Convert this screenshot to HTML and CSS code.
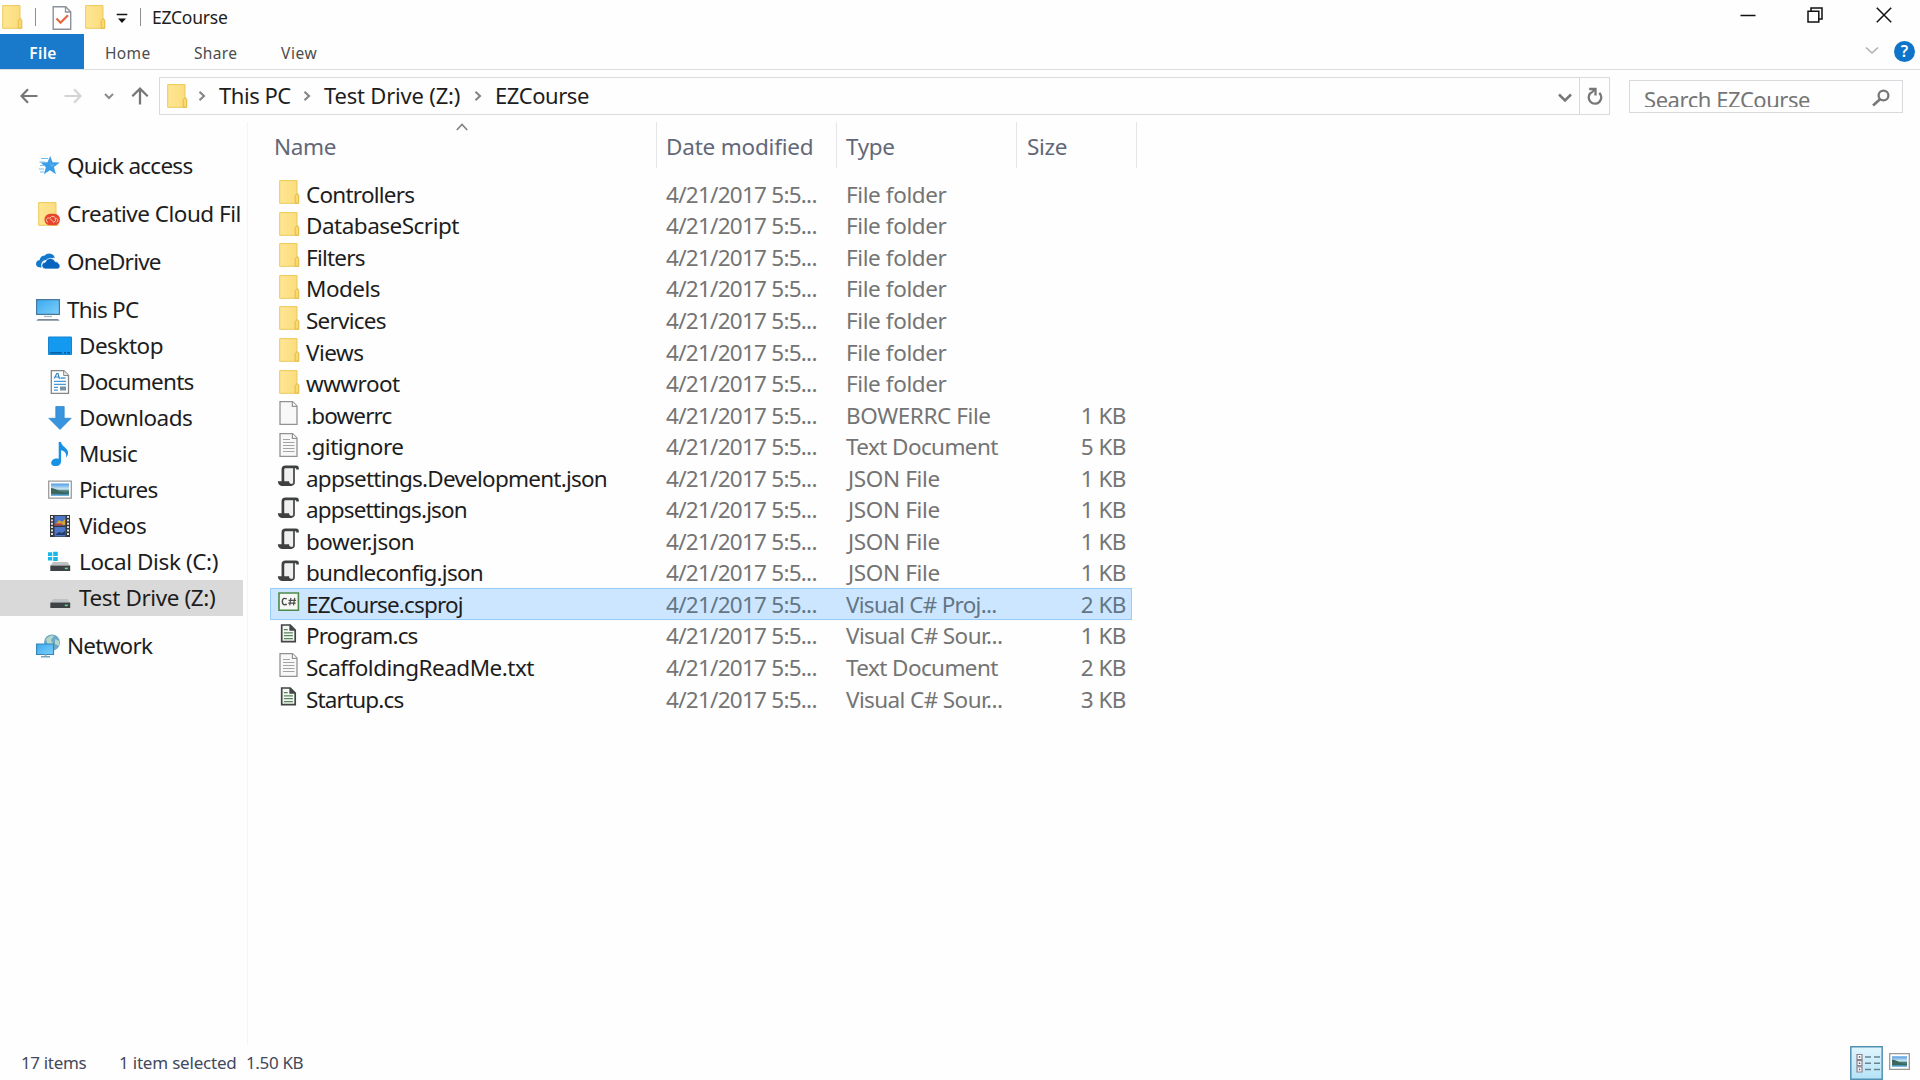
FILE: index.html
```html
<!DOCTYPE html>
<html lang="en">
<head>
<meta charset="utf-8">
<title>EZCourse</title>
<link rel="stylesheet" href="styles.css">
</head>
<body>
<svg class="defs" width="0" height="0" aria-hidden="true">
  <defs>
    <linearGradient id="gFolder" x1="0" y1="0" x2="1" y2="0"><stop offset="0" stop-color="#ffe694"/><stop offset="1" stop-color="#fbdc7c"/></linearGradient>
    <linearGradient id="gScreen" x1="0" y1="0" x2="1" y2="1"><stop offset="0" stop-color="#3aa9ee"/><stop offset="1" stop-color="#7fd0fb"/></linearGradient>
    <linearGradient id="gSky" x1="0" y1="0" x2="0" y2="1"><stop offset="0" stop-color="#4f9be0"/><stop offset=".45" stop-color="#cfe8f6"/><stop offset=".6" stop-color="#45786c"/><stop offset="1" stop-color="#4d9fd8"/></linearGradient>
    <linearGradient id="gSel" x1="0" y1="0" x2="0" y2="1"><stop offset="0" stop-color="#e0f5fd"/><stop offset="1" stop-color="#b5e3f8"/></linearGradient>
    <symbol id="folder" viewBox="0 0 24 24">
      <path d="M2.700.600h17.300v12.700l1.400 1.600v8.400H2.700z" fill="url(#gFolder)" stroke="#ecc95a" stroke-width="1"/>
      <path d="M18.200 23.200v-7.500l1.900-2.200 1.700 2.200v7.500z" fill="#fbd96d" stroke="#dfb846" stroke-width=".9"/>
    </symbol>
    <symbol id="page" viewBox="0 0 24 24">
      <path d="M3 .7h12.600l4.400 4.400v18.200H3z" fill="#f8f8f8" stroke="#929292" stroke-width="1.300"/>
      <path d="M15.400.8v4.600H20" fill="#fff" stroke="#929292" stroke-width="1.200"/>
    </symbol>
    <symbol id="text" viewBox="0 0 24 24">
      <use href="#page"/>
      <path d="M6 6.500h7M6 9.500h11.500M6 12.500h11.500M6 15.500h11.500M6 18.500h11.500" stroke="#a4a4a4" stroke-width="1.200"/>
    </symbol>
    <symbol id="json" viewBox="0 0 24 24">
      <path d="M6 4.500h11.500V19H7z" fill="#f0f0f0"/>
      <path d="M20.500 5.500V4.300Q20.500 2.900 19 2.900H8.500Q5.900 2.900 5.900 5.500V18" fill="none" stroke="#3e4042" stroke-width="2.700"/>
      <path d="M17 4v14.500Q17 20.700 14.300 20.900" fill="none" stroke="#4b4d4f" stroke-width="1.800"/>
      <path d="M.800 17.300h11.200q.2 2.600 3 2.700v2.100H4.800Q1.200 21.600.800 17.300z" fill="#3e4042"/>
    </symbol>
    <symbol id="csproj" viewBox="0 0 24 24">
      <path d="M2 3h19.400v17.300H2z" fill="#f5f8f3" stroke="#4d8a4b" stroke-width="1.600"/>
      <path d="M9.800 8.900Q5.500 7.100 5.300 11.500 5.500 15.900 9.800 14.300" fill="none" stroke="#4c4c4c" stroke-width="1.500"/>
      <path d="M13.900 7.900l-1.200 7.500M17.700 7.900l-1.200 7.500M11.600 10.300h7.500M11.200 13.100h7.500" stroke="#4c4c4c" stroke-width="1.200"/>
    </symbol>
    <symbol id="cs" viewBox="0 0 24 24">
      <path d="M4.700 3h8.500l5 5v11.700H4.700z" fill="#f4f7f3" stroke="#414543" stroke-width="1.700"/>
      <path d="M12.400 2.700v6h6z" fill="#414543"/>
      <path d="M6.900 7.700h3.800M6.900 10.800h9M6.900 13.700h9M6.900 16.600h9" stroke="#56875a" stroke-width="1.300"/>
    </symbol>
    <symbol id="star" viewBox="0 0 24 24">
      <path d="M14.200 2l2.300 6.300 7.200.3-5.800 4.500 2 7.200-6-4-6 4 2-7-5.500-4.700 7.100-.3z" fill="#3b9de6"/>
      <path d="M5 4.500h7M3.500 8h6M4 11.500h5M3 15h5M4 18h4" stroke="#72bdf1" stroke-width="1.100"/>
      <path d="M13.500 6l1.500 4.500 4 .3-4 2" fill="#62b8f4"/>
    </symbol>
    <symbol id="ccloud" viewBox="0 0 24 24">
      <use href="#folder"/>
      <rect x="8.500" y="11.800" width="15.500" height="11.500" rx="5.700" fill="#e7452c"/>
      <path d="M12 20.300q-2-.5-1.700-2.700.6-2 2.900-1.700l4.300 4M20.500 20.300q2-.7 1.300-2.900-1.100-1.700-3-.8M14 16.200q1.200-2.700 3.900-1.700 2 .9 1.700 3.500-.4 2.300-2.600 2.400" fill="none" stroke="#fac1aa" stroke-width="1"/>
    </symbol>
    <symbol id="cloud" viewBox="0 0 24 24">
      <path d="M5.500 17.500H4.200Q0 17.200 0 13.800q.2-3.400 3.600-3.900Q4.700 5.500 9 5.500q.8-2 4.500-2.100 4.200.4 5.400 4.500-3.700-.8-5.700 2Q6.500 9.400 5.300 14z" fill="#1478cd"/>
      <path d="M9.500 19Q5.800 18.800 5.800 15.500q.2-3 3.600-3.400.8-3.700 4.700-3.800 3.600 0 5 3.300 2.800-.2 3.700 2.200h.2Q24 14.600 24 16.300q0 2.600-2.700 2.700z" fill="#0764be" stroke="#fff" stroke-width=".7"/>
    </symbol>
    <symbol id="pc" viewBox="0 0 24 24">
      <path d="M.6 1.600h22.800v14.800H.6z" fill="url(#gScreen)" stroke="#46799f" stroke-width="1.200"/>
      <path d="M8 18.500h8" stroke="#a5b8c4" stroke-width="1.300"/>
      <path d="M2 21h20l1.700 1.800H.3z" fill="#7b8a96"/>
    </symbol>
    <symbol id="desktop" viewBox="0 0 24 24">
      <path d="M.5 3h23v17.500H.5z" fill="#139af0" stroke="#1684cf"/>
      <path d="M2 18.800h20" stroke="#064f8e" stroke-width="1.300" stroke-dasharray="12 2 2 1"/>
    </symbol>
    <symbol id="docs" viewBox="0 0 24 24">
      <path d="M3.300.7h12.500l4.700 4.600v18H3.300z" fill="#fff" stroke="#858585" stroke-width="1.300"/>
      <path d="M15.700.7v4.800h4.800" fill="#eee" stroke="#858585"/>
      <path d="M6.200 8.500l2.600-5h1.200L11.500 9M7.500 7h3" fill="none" stroke="#3487c7" stroke-width="1.200"/>
      <path d="M12.500 8h5M6 11.300h12M6 14.300h12M6 17.300h4M6 20.200h4" stroke="#4798d3" stroke-width="1.300"/>
      <path d="M12 16.500h6v4h-6z" fill="#7593a6"/>
    </symbol>
    <symbol id="down" viewBox="0 0 24 24">
      <path d="M7.800.5h8.400v11.800h7L12 23.500.8 12.300h7z" fill="#3994de" stroke="#287fc8" stroke-width=".7"/>
    </symbol>
    <symbol id="music" viewBox="0 0 24 24">
      <path d="M10.700 0h2.300c.7 5 7.700 6 7 11.500-.2 1.800-.9 3-2 4.300 1-5-1.600-6.700-4.900-7.500v11.200c0 3-3 4.800-5.700 4.700-2.500 0-4.400-1.500-4.200-3.500.3-3.500 4.500-4.900 7.500-4z" fill="#1691e4"/>
    </symbol>
    <symbol id="pics" viewBox="0 0 24 24">
      <path d="M.7 3.200h22.600v17H.7z" fill="#fff" stroke="#9c9c9c" stroke-width="1.300"/>
      <path d="M3 5.500h18v12.300H3z" fill="url(#gSky)"/>
      <path d="M3 10q6 1 9 3.500 4 1 9 1v1.500q-10 .5-18-.5z" fill="#3d665c"/>
    </symbol>
    <symbol id="video" viewBox="0 0 24 24">
      <path d="M2 1h20v22H2z" fill="#36393c"/>
      <path d="M4 2v20M20 2v20" stroke="#e8e8e8" stroke-width="1.900" stroke-dasharray="1.900 1.500"/>
      <path d="M6.500 2h11v9.500h-11zM6.500 13h11v9.500h-11z" fill="#4d75c8"/>
      <path d="M7 11l4-5 3 2 3-3v6z" fill="#d5a337"/><path d="M6.500 9.500h8v2h-8z" fill="#b94448"/>
      <path d="M7 21l4-3 3 1 3-2v4z" fill="#263c68"/>
    </symbol>
    <symbol id="disk" viewBox="0 0 24 24">
      <path d="M5 13h14.500l2.500 3.500H2.500z" fill="#bfc2c4"/>
      <path d="M2.300 16.500h19.900v5.500H2.300z" fill="#3f4244"/>
      <path d="M16.800 19.400h3" stroke="#5fe08a" stroke-width="1.500"/>
    </symbol>
    <symbol id="cdisk" viewBox="0 0 24 24">
      <use href="#disk" y="-1"/>
      <path d="M0 2.200h4.200v3.700H0zM5.200 1.700h4.600v4.200H5.200zM0 6.900h4.200v3.700H0zM5.200 6.900h4.600v4.200H5.200z" fill="#19b8e8"/>
    </symbol>
    <symbol id="net" viewBox="0 0 24 24">
      <circle cx="16" cy="8.500" r="8" fill="#6da9c7"/>
      <path d="M10 5q5-5 8-3l-3 4 2 4-5 2zM19 5l4 2v5l-4-2z" fill="#b4d7c9"/>
      <path d="M.6 10h16.900v10.500H.6z" fill="url(#gScreen)" stroke="#3985b8" stroke-width="1.200"/>
      <path d="M5 22.800h9M9.500 20v3" stroke="#78a5bd" stroke-width="1.400"/>
    </symbol>
    <symbol id="chev" viewBox="0 0 10 12"><path d="M2.500 1.800L7 6l-4.500 4.200" fill="none" stroke="#848484" stroke-width="2.100"/></symbol>
  </defs>
</svg>

<div class="window">
  <header class="titlebar">
    <svg class="t-folder"><use href="#folder"/></svg>
    <i class="t-sep sep-a"></i>
    <svg class="t-check" viewBox="0 0 20 24"><path d="M1.200.8h12.500l5 5v17.400H1.200z" fill="#fff" stroke="#8c919b" stroke-width="1.400"/><path d="M13.500 1v5h5" fill="none" stroke="#8c919b" stroke-width="1.300"/><path d="M4.500 12.500l4 4.200 7.500-7.500" fill="none" stroke="#e8693f" stroke-width="2.300"/></svg>
    <svg class="t-folder second"><use href="#folder"/></svg>
    <svg class="t-more" viewBox="0 0 12 12"><path d="M.7 1.500h10.600" stroke="#111" stroke-width="1.500"/><path d="M2 5.500h8L6 10z" fill="#111"/></svg>
    <i class="t-sep sep-b"></i>
    <h1>EZCourse</h1>
    <div class="controls">
      <svg class="c-min" viewBox="0 0 16 16"><path d="M.5 8.500h15" stroke="#111" stroke-width="1.500"/></svg>
      <svg class="c-max" viewBox="0 0 16 16"><path d="M1 4.200h10.800V15H1zM4 4V1h11v11h-3" fill="none" stroke="#111" stroke-width="1.500"/></svg>
      <svg class="c-close" viewBox="0 0 16 16"><path d="M.8.800l14.400 14.400M15.200.800L.8 15.200" stroke="#111" stroke-width="1.500"/></svg>
    </div>
  </header>

  <nav class="ribbon">
    <span class="tab file">File</span>
    <span class="tab home">Home</span>
    <span class="tab share">Share</span>
    <span class="tab view">View</span>
    <div class="ribbon-end">
      <svg class="expand" viewBox="0 0 14 10"><path d="M1 1.500l6 5.500 6-5.500" fill="none" stroke="#b0b0b0" stroke-width="1.600"/></svg>
      <span class="help">?</span>
    </div>
  </nav>

  <div class="addressbar">
    <svg class="n-back" viewBox="0 0 18 16"><path d="M17.500 8H1.500M8 1.300L1.500 8 8 14.700" fill="none" stroke="#777" stroke-width="2.200"/></svg>
    <svg class="n-fwd" viewBox="0 0 18 16"><path d="M.5 8h16M10 1.300L16.500 8 10 14.700" fill="none" stroke="#d4d4d4" stroke-width="2.200"/></svg>
    <svg class="n-recent" viewBox="0 0 10 7"><path d="M1 1l4 4 4-4" fill="none" stroke="#8b8b8b" stroke-width="2"/></svg>
    <svg class="n-up" viewBox="0 0 18 18"><path d="M9 17.500V2M1.300 9.300L9 1.600l7.700 7.700" fill="none" stroke="#777" stroke-width="2.300"/></svg>
    <div class="path">
      <svg class="p-folder"><use href="#folder"/></svg>
      <svg class="p-chev"><use href="#chev"/></svg><span class="crumb c1">This PC</span>
      <svg class="p-chev"><use href="#chev"/></svg><span class="crumb c2">Test Drive (Z:)</span>
      <svg class="p-chev"><use href="#chev"/></svg><span class="crumb c3">EZCourse</span>
      <svg class="p-down" viewBox="0 0 14 10"><path d="M1 1.500l6 6 6-6" fill="none" stroke="#777" stroke-width="2.500"/></svg>
      <div class="refresh"><svg viewBox="0 0 16 18"><path d="M12.300 5.800A6.300 6.300 0 1 1 3.800 5.700" fill="none" stroke="#777" stroke-width="2.300"/><path d="M2.200 2h6.300v6.500" fill="none" stroke="#777" stroke-width="2.300"/><path d="M8 2.500L3.800 6.300" stroke="#777" stroke-width="2"/></svg></div>
    </div>
    <div class="search">
      <span class="query">Search EZCourse</span>
      <svg viewBox="0 0 18 18"><circle cx="11.500" cy="6.500" r="4.900" fill="none" stroke="#777" stroke-width="2.300"/><path d="M8 10.200L1 16.500" stroke="#777" stroke-width="2.600"/></svg>
    </div>
  </div>

  <main class="body">
    <aside class="tree">
      <div class="node top"><svg><use href="#star"/></svg><span class="tight">Quick access</span></div>
      <div class="node top"><svg><use href="#ccloud"/></svg><span>Creative Cloud Fil</span></div>
      <div class="node top"><svg><use href="#cloud"/></svg><span class="tight">OneDrive</span></div>
      <div class="node"><svg><use href="#pc"/></svg><span class="tight">This PC</span></div>
      <div class="node sub"><svg><use href="#desktop"/></svg><span>Desktop</span></div>
      <div class="node sub"><svg><use href="#docs"/></svg><span class="tight">Documents</span></div>
      <div class="node sub"><svg><use href="#down"/></svg><span>Downloads</span></div>
      <div class="node sub"><svg><use href="#music"/></svg><span class="tight">Music</span></div>
      <div class="node sub"><svg><use href="#pics"/></svg><span class="tight">Pictures</span></div>
      <div class="node sub"><svg><use href="#video"/></svg><span>Videos</span></div>
      <div class="node sub"><svg><use href="#cdisk"/></svg><span class="wide">Local Disk (C:)</span></div>
      <div class="node sub current"><svg><use href="#disk"/></svg><span class="wide">Test Drive (Z:)</span></div>
      <div class="node"><svg><use href="#net"/></svg><span class="tight">Network</span></div>
    </aside>

    <section class="list">
      <div class="head">
        <div class="h-name">Name<svg class="sort" viewBox="0 0 12 8"><path d="M.8 7L6 1.500 11.200 7" fill="none" stroke="#808080" stroke-width="1.600"/></svg></div>
        <div class="h-date">Date modified</div>
        <div class="h-type">Type</div>
        <div class="h-size">Size</div>
      </div>
      <div class="rows">
        <div class="row"><svg><use href="#folder"/></svg><b class="tight">Controllers</b><time>4/21/2017 5:5...</time><span>File folder</span><em></em></div>
        <div class="row"><svg><use href="#folder"/></svg><b>DatabaseScript</b><time>4/21/2017 5:5...</time><span>File folder</span><em></em></div>
        <div class="row"><svg><use href="#folder"/></svg><b class="tight">Filters</b><time>4/21/2017 5:5...</time><span>File folder</span><em></em></div>
        <div class="row"><svg><use href="#folder"/></svg><b>Models</b><time>4/21/2017 5:5...</time><span>File folder</span><em></em></div>
        <div class="row"><svg><use href="#folder"/></svg><b class="tight">Services</b><time>4/21/2017 5:5...</time><span>File folder</span><em></em></div>
        <div class="row"><svg><use href="#folder"/></svg><b>Views</b><time>4/21/2017 5:5...</time><span>File folder</span><em></em></div>
        <div class="row"><svg><use href="#folder"/></svg><b>wwwroot</b><time>4/21/2017 5:5...</time><span>File folder</span><em></em></div>
        <div class="row"><svg><use href="#page"/></svg><b class="tighter">.bowerrc</b><time>4/21/2017 5:5...</time><span>BOWERRC File</span><em>1 KB</em></div>
        <div class="row"><svg><use href="#text"/></svg><b>.gitignore</b><time>4/21/2017 5:5...</time><span class="doc">Text Document</span><em>5 KB</em></div>
        <div class="row"><svg><use href="#json"/></svg><b class="tight">appsettings.Development.json</b><time>4/21/2017 5:5...</time><span class="json">JSON File</span><em>1 KB</em></div>
        <div class="row"><svg><use href="#json"/></svg><b class="tighter">appsettings.json</b><time>4/21/2017 5:5...</time><span class="json">JSON File</span><em>1 KB</em></div>
        <div class="row"><svg><use href="#json"/></svg><b>bower.json</b><time>4/21/2017 5:5...</time><span class="json">JSON File</span><em>1 KB</em></div>
        <div class="row"><svg><use href="#json"/></svg><b class="tight">bundleconfig.json</b><time>4/21/2017 5:5...</time><span class="json">JSON File</span><em>1 KB</em></div>
        <div class="row selected"><svg><use href="#csproj"/></svg><b class="tighter">EZCourse.csproj</b><time>4/21/2017 5:5...</time><span class="proj">Visual C# Proj...</span><em>2 KB</em></div>
        <div class="row"><svg><use href="#cs"/></svg><b class="tighter">Program.cs</b><time>4/21/2017 5:5...</time><span class="doc">Visual C# Sour...</span><em>1 KB</em></div>
        <div class="row"><svg><use href="#text"/></svg><b>ScaffoldingReadMe.txt</b><time>4/21/2017 5:5...</time><span class="doc">Text Document</span><em>2 KB</em></div>
        <div class="row"><svg><use href="#cs"/></svg><b class="tighter">Startup.cs</b><time>4/21/2017 5:5...</time><span class="doc">Visual C# Sour...</span><em>3 KB</em></div>
      </div>
    </section>
  </main>

  <footer class="status">
    <span class="s-count">17 items</span>
    <span class="s-sel">1 item selected</span>
    <span class="s-size">1.50 KB</span>
    <div class="views">
      <svg class="v-details" viewBox="0 0 33 34"><path d="M.8.800h31.400v32.400H.8z" fill="url(#gSel)" stroke="#5391b0" stroke-width="1.500"/><path d="M7 8.500h5v5H7zM7 14.700h5v5H7zM7 21h5v5H7z" fill="#fff" stroke="#8d7f8b" stroke-width="1.200"/><path d="M8.800 11h1.500M8.800 17.200h1.500M8.800 23.500h1.500" stroke="#555" stroke-width="1.500"/><path d="M15 11h6M24 11h6M15 17.200h6M24 17.200h6M15 23.500h6M24 23.500h6" stroke="#66838e" stroke-width="1.500"/></svg>
      <svg class="v-large" viewBox="0 0 21 17"><path d="M.7.700h19.600v15.600H.7z" fill="#fff" stroke="#989898" stroke-width="1.300"/><path d="M3 3.300h15v10.400H3z" fill="url(#gSky)"/><path d="M3 6.500q6 1 8 3.500l7 1v1H3z" fill="#3d665c"/></svg>
    </div>
  </footer>
</div>
</body>
</html>
```

FILE: styles.css
```css
* { box-sizing: border-box; }
body {
  margin: 0;
  background: #fefefe;
  font-family: "Noto Sans", "Open Sans", sans-serif;
  color: #1d1d1d;
}
svg { display: block; flex: none; overflow: visible; }
.defs { position: absolute; }
.window { width: 1920px; height: 1080px; display: flex; flex-direction: column; overflow: hidden; }

/* title bar */
.titlebar { height: 34px; flex: none; display: flex; align-items: center; }
.t-folder { width: 24px; height: 24px; }
.t-folder.second { margin-left: 11px; }
.t-sep { width: 1px; height: 18px; background: #8f8f8f; }
.sep-a { margin: 0 16px 0 11px; }
.sep-b { margin-left: 12px; }
.t-check { width: 20px; height: 24px; margin-top: 2px; }
.t-more { width: 12px; height: 12px; margin: 4px 0 0 9px; }
.titlebar h1 { margin: 0 0 0 11px; font-size: 17.5px; font-weight: 400; line-height: 35px; letter-spacing: -0.25px; }
.controls { margin-left: auto; display: flex; align-items: center; padding: 0 28px 4px 0; }
.controls svg { width: 16px; height: 16px; }
.c-max { margin-left: 51px; }
.c-close { margin-left: 53px; }

/* ribbon */
.ribbon { height: 36px; flex: none; display: flex; border-bottom: 1px solid #dcdde0; font-size: 15.5px; line-height: 38px; color: #4c4c4c; }
.tab { padding-left: 21px; letter-spacing: 0.35px; }
.tab.file { width: 84px; height: 35px; padding-left: 2px; text-align: center; background: #1979ca; color: #fff; font-weight: 600; }
.tab.home { width: 89px; }
.tab.share { width: 87px; }
.tab.view { letter-spacing: 0.6px; }
.ribbon-end { margin-left: auto; display: flex; align-items: center; gap: 15px; padding: 0 5px 1px 0; }
.expand { width: 14px; height: 10px; }
.help { width: 21px; height: 21px; border-radius: 50%; background: #0d74c9; color: #fff; font-size: 16px; line-height: 21px; text-align: center; font-weight: 600; }

/* address bar */
.addressbar { height: 52px; flex: none; display: flex; align-items: flex-start; padding: 7px 0 0 20px; }
.n-back { width: 18px; height: 16px; margin-top: 11px; }
.n-fwd { width: 18px; height: 16px; margin: 11px 0 0 26px; }
.n-recent { width: 10px; height: 7px; margin: 16px 0 0 22px; }
.n-up { width: 18px; height: 18px; margin: 10px 0 0 17px; }
.path { width: 1451px; height: 38px; margin-left: 10px; border: 1px solid #d9dadd; display: flex; align-items: center; }
.p-folder { width: 24px; height: 24px; margin: -1px 0 0 5px; }
.p-chev { width: 10px; height: 12px; margin-left: 8px; }
.crumb { font-size: 22px; line-height: 34px; height: 36px; letter-spacing: -0.45px; white-space: nowrap; }
.c1 { width: 75px; margin-left: 12px; }
.c2 { width: 141px; margin-left: 12px; letter-spacing: -0.2px; }
.c3 { margin-left: 12px; }
.p-down { width: 14px; height: 10px; margin: 4px 7px 0 auto; }
.refresh { width: 30px; height: 36px; border-left: 1px solid #d9dadd; display: flex; align-items: center; justify-content: center; }
.refresh svg { width: 16px; height: 18px; }
.search { width: 274px; height: 33px; margin: 3px 0 0 19px; border: 1px solid #d9dadd; padding-left: 14px; display: flex; }
.query { height: 26px; overflow: hidden; color: #757575; font-size: 22px; line-height: 36px; letter-spacing: -0.45px; white-space: nowrap; }
.search svg { width: 18px; height: 18px; margin: 8px 12px 0 auto; }

/* body */
.body { flex: 1; min-height: 0; display: flex; }
.tree { width: 248px; flex: none; border-right: 1px solid #f4f4f4; padding-top: 26px; }
.node { height: 36px; width: 243px; display: flex; align-items: center; padding-left: 36px; font-size: 22.5px; line-height: 36px; letter-spacing: -0.5px; white-space: nowrap; }
.node svg { width: 24px; height: 24px; margin-right: 7px; }
.node span { height: 36px; }
.node .tight { letter-spacing: -0.75px; }
.node .wide { letter-spacing: -0.4px; }
.node.top { margin-bottom: 12px; }
.node.sub { padding-left: 48px; }
.node.current { background: #d9d9d9; margin-bottom: 12px; }

/* file list */
.list { padding-left: 22px; }
.head { display: flex; height: 46px; margin-bottom: 10px; font-size: 22.5px; line-height: 49px; letter-spacing: -0.35px; color: #626878; }
.head div { border-right: 1px solid #e4e6ea; padding-left: 9px; }
.head .h-name { width: 387px; padding-left: 4px; position: relative; }
.sort { position: absolute; left: 186px; top: 1px; width: 12px; height: 8px; }
.h-date, .h-type { width: 180px; }
.h-date { letter-spacing: -0.2px; }
.head .h-size { width: 120px; padding-left: 10px; }
.row { height: 31.55px; width: 862px; display: flex; align-items: center; padding-left: 6px; font-size: 22.5px; letter-spacing: -0.5px; line-height: 32px; white-space: nowrap; border: 1px solid transparent; }
.row svg { width: 24px; height: 24px; margin: -3px 5px 0 0; }
.row b, .row time, .row span, .row em { padding-top: 2px; }
.row b { width: 360px; font-weight: 400; }
.row .tight { letter-spacing: -0.76px; }
.row .tighter { letter-spacing: -0.85px; }
.row time, .row span { width: 180px; color: #747474; }
.row time { letter-spacing: -0.74px; }
.row span { letter-spacing: -0.4px; }
.row .doc { letter-spacing: -0.6px; }
.row .proj { letter-spacing: -0.72px; }
.row .json { letter-spacing: -0.35px; padding-left: 2px; }
.row em { flex: 1; padding-right: 5px; text-align: right; font-style: normal; color: #747474; }
.row.selected { background: #cce6ff; border-color: #98cbf5; }
.row.selected time, .row.selected span, .row.selected em { color: #647584; }

/* status bar */
.status { height: 36px; flex: none; display: flex; font-size: 17px; line-height: 38px; letter-spacing: -0.35px; color: #43485c; padding-left: 21px; }
.s-count { width: 98px; }
.s-sel { width: 127px; letter-spacing: -0.2px; }
.views { margin-left: auto; display: flex; align-items: flex-start; gap: 6px; padding-right: 10px; }
.v-details { width: 33px; height: 34px; margin-top: 2px; }
.v-large { width: 21px; height: 17px; margin-top: 9px; }
```
